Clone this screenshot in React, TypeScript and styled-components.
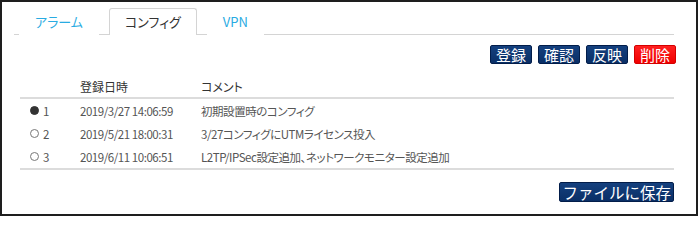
import React, { useState } from 'react';
import styled, { createGlobalStyle } from 'styled-components';

interface ConfigEntry {
  id: number;
  date: string;
  comment: string;
}

const GlobalStyle = createGlobalStyle`
  body {
    margin: 0;
    background: #fff;
    font-family: "Noto Sans CJK JP", "Noto Sans", sans-serif;
  }
`;

const Frame = styled.div`
  box-sizing: border-box;
  width: 698px;
  height: 216px;
  border: 2px solid #1e1e1e;
  padding: 6px 22px 0 12px;
  background: #fff;
`;

const TabBar = styled.div`
  display: flex;
  gap: 10px;
  padding-left: 5px;
  border-bottom: 1px solid #d4d4d4;
  height: 26px;
`;

const Tab = styled.div<{ active: boolean }>`
  box-sizing: border-box;
  height: 27px;
  line-height: 26px;
  padding: 0 15px;
  font-size: 13px;
  font-feature-settings: "palt";
  color: ${props => (props.active ? '#333' : '#29abe2')};
  background: #fff;
  border: 1px solid ${props => (props.active ? '#d4d4d4' : 'transparent')};
  border-bottom: none;
  border-radius: 3px 3px 0 0;
  cursor: pointer;
`;

const Toolbar = styled.div`
  display: flex;
  justify-content: flex-end;
  gap: 6px;
  margin: 10px -2px 0 0;
`;

const ActionButton = styled.button<{ danger?: boolean }>`
  box-sizing: border-box;
  height: 19px;
  padding: 0 5px;
  border: 1px solid ${props => (props.danger ? '#d40000' : '#021d4a')};
  border-radius: 2px;
  background: ${props =>
    props.danger
      ? 'linear-gradient(#ff2020, #f00000)'
      : 'linear-gradient(#14407e, #0a2f66)'};
  color: #fff;
  font-family: "Noto Sans CJK JP", sans-serif;
  font-size: 15px;
  line-height: 17px;
  cursor: pointer;
`;

const Table = styled.div`
  margin: 12px 0 0 6px;
  color: #505050;
  font-feature-settings: "palt";
`;

const Row = styled.div<{ head?: boolean }>`
  display: grid;
  grid-template-columns: 60px 121px 1fr;
  align-items: center;
  height: ${props => (props.head ? '21px' : '23px')};
  color: ${props => (props.head ? '#333' : '#555')};
  font-size: ${props => (props.head ? '12px' : '11.5px')};
  letter-spacing: ${props => (props.head ? '0' : '-0.45px')};
  border-bottom: ${props => (props.head ? '2px solid #dcdcdc' : 'none')};

  &:last-child {
    border-bottom: 2px solid #dcdcdc;
  }
`;

const RadioCell = styled.label`
  display: flex;
  align-items: center;
  gap: 4px;
  padding-left: 10px;
  cursor: pointer;
`;

const RadioDot = styled.span<{ checked: boolean }>`
  box-sizing: border-box;
  width: 9px;
  height: 9px;
  border-radius: 50%;
  border: 1px solid ${props => (props.checked ? '#333' : '#777')};
  background: ${props => (props.checked ? '#333' : '#fff')};
`;

const Footer = styled.div`
  display: flex;
  justify-content: flex-end;
  margin-top: 12px;
`;

const SaveButton = styled(ActionButton)`
  height: 20px;
  padding: 0 2px;
  font-size: 15.5px;
  line-height: 18px;
`;

const entries: ConfigEntry[] = [
  { id: 1, date: '2019/3/27 14:06:59', comment: '初期設置時のコンフィグ' },
  { id: 2, date: '2019/5/21 18:00:31', comment: '3/27コンフィグにUTMライセンス投入' },
  { id: 3, date: '2019/6/11 10:06:51', comment: 'L2TP/IPSec設定追加、ネットワークモニター設定追加' },
];

const tabs = ['アラーム', 'コンフィグ', 'VPN'];

const App: React.FC = () => {
  const [activeTab, setActiveTab] = useState(1);
  const [selected, setSelected] = useState(1);

  return (
    <>
      <GlobalStyle />
      <Frame>
        <TabBar>
          {tabs.map((label, index) => (
            <Tab key={label} active={activeTab === index} onClick={() => setActiveTab(index)}>
              {label}
            </Tab>
          ))}
        </TabBar>

        <Toolbar>
          <ActionButton>登録</ActionButton>
          <ActionButton>確認</ActionButton>
          <ActionButton>反映</ActionButton>
          <ActionButton danger>削除</ActionButton>
        </Toolbar>

        <Table>
          <Row head>
            <span />
            <span>登録日時</span>
            <span>コメント</span>
          </Row>
          {entries.map(entry => (
            <Row key={entry.id}>
              <RadioCell onClick={() => setSelected(entry.id)}>
                <RadioDot checked={selected === entry.id} />
                {entry.id}
              </RadioCell>
              <span>{entry.date}</span>
              <span>{entry.comment}</span>
            </Row>
          ))}
        </Table>

        <Footer>
          <SaveButton>ファイルに保存</SaveButton>
        </Footer>
      </Frame>
    </>
  );
};

export default App;
